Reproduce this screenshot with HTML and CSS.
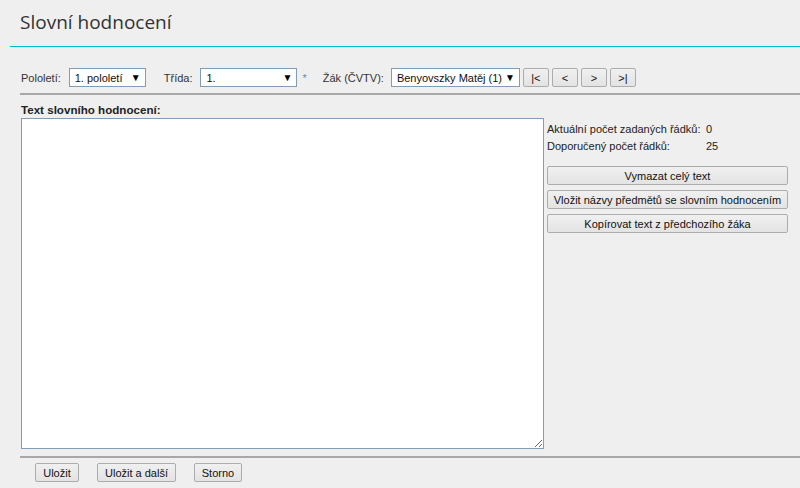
FILE: index.html
```html
<!DOCTYPE html>
<html lang="cs">
<head>
<meta charset="utf-8">
<title>Slovní hodnocení</title>
<link rel="stylesheet" href="styles.css">
</head>
<body>
<div class="header"><h1 class="title">Slovní hodnocení</h1></div>
<div class="filters">
  <span class="lbl">Pololetí:</span>
  <div class="select w1"><span>1. pololetí</span><span class="arr">▼</span></div>
  <span class="lbl l2">Třída:</span>
  <div class="select w2"><span>1.</span><span class="arr">▼</span></div>
  <span class="req">*</span>
  <span class="lbl l3">Žák (ČVTV):</span>
  <div class="select w3"><span>Benyovszky Matěj (1)</span><span class="arr">▼</span></div>
  <button class="btn nav">|&lt;</button>
  <button class="btn nav">&lt;</button>
  <button class="btn nav">&gt;</button>
  <button class="btn nav">&gt;|</button>
</div>
<div class="main">
  <div class="caption">Text slovního hodnocení:</div>
  <div class="editor">
    <textarea class="text"></textarea>
    <div class="side">
      <div class="info"><span class="k">Aktuální počet zadaných řádků:</span><span>0</span></div>
      <div class="info"><span class="k">Doporučený počet řádků:</span><span>25</span></div>
      <div class="actions">
        <button class="btn wide">Vymazat celý text</button>
        <button class="btn wide">Vložit názvy předmětů se slovním hodnocením</button>
        <button class="btn wide">Kopírovat text z předchozího žáka</button>
      </div>
    </div>
  </div>
</div>
<div class="footer">
  <button class="btn f1">Uložit</button>
  <button class="btn f2">Uložit a další</button>
  <button class="btn f3">Storno</button>
</div>
</body>
</html>
```
FILE: styles.css
```css
html, body { margin: 0; padding: 0; }
body {
  background: #efefef;
  font-family: "Liberation Sans", Arial, sans-serif;
  font-size: 11px;
  color: #2a2a2a;
  width: 800px;
  height: 488px;
  overflow: hidden;
}
.header {
  margin-left: 10px;
  height: 47px;
  border-bottom: 1px solid #00b8d0;
  box-sizing: border-box;
  padding: 9px 0 0 10px;
}
.title {
  margin: 0;
  font-family: "Open Sans", sans-serif;
  font-weight: normal;
  font-size: 19px;
  line-height: 26px;
  color: #333;
}
.filters {
  margin: 21px 0 0 20px;
  padding: 0 0 6px 1px;
  border-bottom: 2px solid #a8a8a8;
  display: flex;
  align-items: center;
  height: 19px;
}
.lbl { color: #333; }
.l2 { margin-left: 18px; }
.l3 { margin-left: 16px; }
.select {
  box-sizing: border-box;
  height: 19px;
  background: #fff;
  border: 1px solid #7f9db9;
  margin-left: 8px;
  display: flex;
  align-items: center;
  justify-content: space-between;
  padding: 0 4px 0 5px;
  color: #111;
}
.arr { font-size: 10px; color: #000; }
.w1 { width: 77px; }
.w2 { width: 97px; }
.w3 { width: 129px; margin-left: 7px; }
.req { color: #5a8fc0; margin-left: 5px; }
.btn {
  box-sizing: border-box;
  height: 19px;
  padding: 0;
  border: 1px solid #acacac;
  border-radius: 2px;
  background: linear-gradient(#f0f0f0, #e3e3e3);
  font-family: "Liberation Sans", Arial, sans-serif;
  font-size: 11px;
  color: #111;
}
.nav { width: 26px; margin-left: 3px; }
.main { margin-left: 21px; }
.caption {
  font-weight: bold;
  font-size: 11.6px;
  color: #222;
  margin-top: 7px;
  height: 16px;
  line-height: 16px;
}
.editor { display: flex; align-items: flex-start; }
.text {
  box-sizing: border-box;
  width: 523px;
  height: 331px;
  margin: 0;
  border: 1px solid #7f9db9;
  background: #fff;
  resize: both;
}
.side { margin-left: 3px; width: 241px; padding-top: 3px; }
.info { display: flex; height: 17px; line-height: 17px; color: #222; }
.info .k { width: 159px; }
.actions { display: flex; flex-direction: column; gap: 5px; margin-top: 11px; }
.wide { width: 241px; }
.footer {
  margin: 7px 0 0 20px;
  border-top: 2px solid #a8a8a8;
  padding: 5px 0 0 15px;
  display: flex;
}
.f1 { width: 44px; }
.f2 { width: 79px; margin-left: 18px; }
.f3 { width: 48px; margin-left: 18px; }
```
